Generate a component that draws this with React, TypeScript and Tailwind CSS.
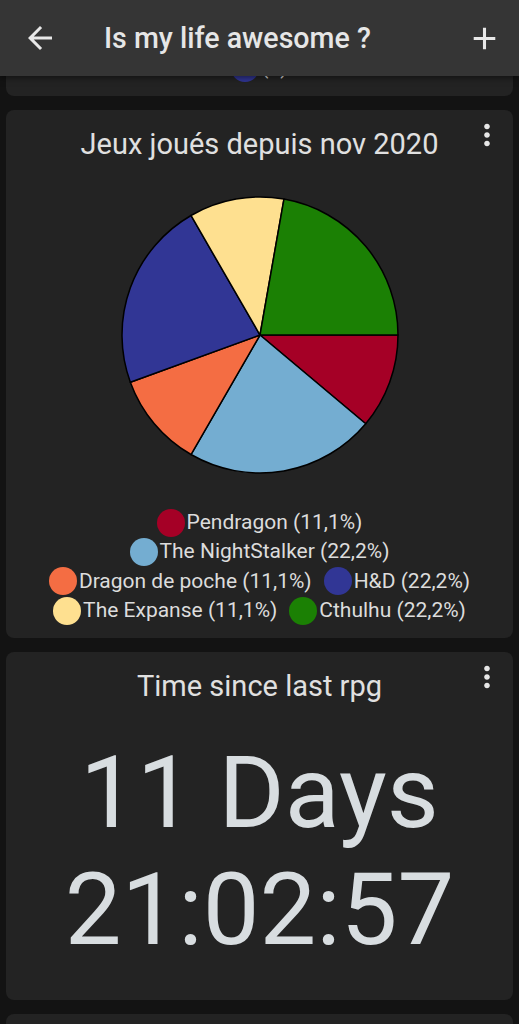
import React from "react";

const slices = [
  { label: "Pendragon", pct: "11,1%", value: 1, color: "#a50026" },
  { label: "The NightStalker", pct: "22,2%", value: 2, color: "#74add1" },
  { label: "Dragon de poche", pct: "11,1%", value: 1, color: "#f46d43" },
  { label: "H&D", pct: "22,2%", value: 2, color: "#313695" },
  { label: "The Expanse", pct: "11,1%", value: 1, color: "#fee090" },
  { label: "Cthulhu", pct: "22,2%", value: 2, color: "#1b8004" },
];

const font = { fontFamily: "Roboto, 'Noto Sans', sans-serif" };

function MoreVert() {
  return (
    <svg viewBox="0 0 24 24" className="h-[34px] w-[34px]" fill="#e6e6e6">
      <path d="M12 8c1.1 0 2-.9 2-2s-.9-2-2-2-2 .9-2 2 .9 2 2 2zm0 2c-1.1 0-2 .9-2 2s.9 2 2 2 2-.9 2-2-.9-2-2-2zm0 6c-1.1 0-2 .9-2 2s.9 2 2 2 2-.9 2-2-.9-2-2-2z" />
    </svg>
  );
}

function Pie() {
  const cx = 140;
  const cy = 140;
  const r = 138;
  const total = slices.reduce((s, x) => s + x.value, 0);
  let angle = 0;
  return (
    <svg width="280" height="280" viewBox="0 0 280 280">
      {slices.map((s) => {
        const a0 = angle;
        const a1 = angle + (s.value / total) * Math.PI * 2;
        angle = a1;
        const x0 = cx + r * Math.cos(a0);
        const y0 = cy + r * Math.sin(a0);
        const x1 = cx + r * Math.cos(a1);
        const y1 = cy + r * Math.sin(a1);
        const large = a1 - a0 > Math.PI ? 1 : 0;
        return (
          <path
            key={s.label}
            d={`M${cx} ${cy} L${x0} ${y0} A${r} ${r} 0 ${large} 1 ${x1} ${y1} Z`}
            fill={s.color}
            stroke="#000"
            strokeWidth="1.5"
            strokeLinejoin="round"
          />
        );
      })}
    </svg>
  );
}

function LegendItem({ color, text }: { color: string; text: string }) {
  return (
    <div className="flex h-[29.3px] items-center gap-[2px]">
      <span className="h-[28px] w-[28px] rounded-full" style={{ backgroundColor: color }} />
      <span className="text-[21px] leading-[29px] text-[#dcdcdc]">{text}</span>
    </div>
  );
}

export default function App() {
  return (
    <div className="min-h-[1024px] overflow-hidden bg-[#131313]" style={font}>
      {/* App bar */}
      <header className="relative z-10 flex h-[76px] items-center bg-[#353535] shadow-[0_2px_6px_rgba(0,0,0,0.5)]">
        <svg viewBox="0 0 24 24" className="ml-[22px] h-[36px] w-[36px]" fill="#e8e8e8">
          <path d="M20 11H7.83l5.59-5.59L12 4l-8 8 8 8 1.41-1.41L7.83 13H20v-2z" />
        </svg>
        <h1 className="ml-[46px] flex-1 text-[28.6px] font-medium text-[#e6e6e6]">Is my life awesome ?</h1>
        <svg viewBox="0 0 24 24" className="mr-[16px] h-[37px] w-[37px]" fill="#e8e8e8">
          <path d="M19 13h-6v6h-2v-6H5v-2h6V5h2v6h6v2z" />
        </svg>
      </header>

      <div className="flex flex-col gap-[14px] px-[6px]">
        {/* Previous card, scrolled under the bar */}
        <div className="h-[20px] overflow-hidden rounded-b-lg bg-[#232323]">
          <div className="-mt-[23px] flex justify-center">
            <LegendItem color="#313695" text="(1)" />
          </div>
        </div>

        {/* Pie card */}
        <section className="relative flex flex-col items-center rounded-lg bg-[#232323] pb-[13px] pt-[18px]">
          <button className="absolute right-[9px] top-[8px]">
            <MoreVert />
          </button>
          <h2 className="text-[29px] leading-[33px] text-[#e0e0e0]">Jeux joués depuis nov 2020</h2>
          <div className="mt-[34px]">
            <Pie />
          </div>
          <div className="mt-[33px] flex w-[470px] flex-wrap justify-center gap-x-[12px]">
            {slices.map((s) => (
              <LegendItem key={s.label} color={s.color} text={`${s.label} (${s.pct})`} />
            ))}
          </div>
        </section>

        {/* Timer card */}
        <section className="relative flex flex-col items-center rounded-lg bg-[#232323] pb-[32px] pt-[18px]">
          <button className="absolute right-[9px] top-[8px]">
            <MoreVert />
          </button>
          <h2 className="text-[29px] leading-[33px] text-[#e0e0e0]">Time since last rpg</h2>
          <div className="mt-[31px] text-center text-[101px] leading-[117px] text-[#d8dde0]">
            <div>11 Days</div>
            <div>21:02:57</div>
          </div>
        </section>

        <div className="h-[40px] rounded-t-lg bg-[#232323]" />
      </div>
    </div>
  );
}
